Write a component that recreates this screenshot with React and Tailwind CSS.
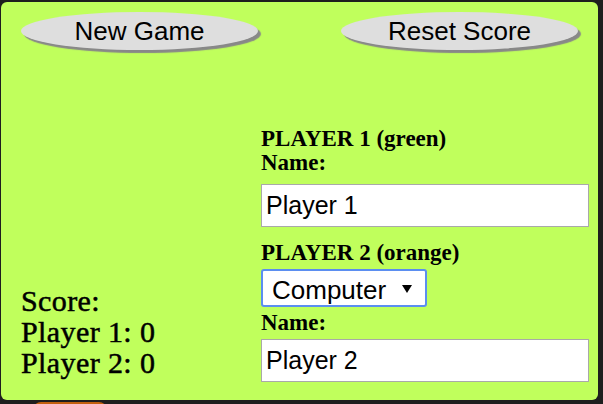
import React, { useState } from 'react';

const serif = { fontFamily: '"Liberation Serif", "DejaVu Serif", serif' };
const sans = { fontFamily: '"Liberation Sans", Arial, sans-serif' };

const PillButton = ({ children, onClick }) => (
  <button
    onClick={onClick}
    className="w-[237px] h-[38px] rounded-[50%] bg-[#dedede] text-black text-[26px] leading-none shadow-[3px_3px_1px_#888888]"
    style={sans}
  >
    {children}
  </button>
);

export default function App() {
  const [score, setScore] = useState({ p1: 0, p2: 0 });
  const [p1Name, setP1Name] = useState('Player 1');
  const [p2Name, setP2Name] = useState('Player 2');
  const [p2Type, setP2Type] = useState('computer');

  return (
    <div className="w-[603px] h-[404px] overflow-hidden bg-[#1e1e1e]">
      <div className="ml-px mt-[2px] w-[597px] h-[398px] rounded-md bg-[#c0ff5c] pl-5 pr-[9px] pt-[10px]">
        {/* Top buttons */}
        <div className="flex justify-between w-[557px]">
          <PillButton>New Game</PillButton>
          <PillButton onClick={() => setScore({ p1: 0, p2: 0 })}>Reset Score</PillButton>
        </div>

        <div className="flex items-end mt-[77px]">
          {/* Score */}
          <div
            className="w-[240px] mb-[4px] text-[30px] leading-[31px] tracking-[0.4px] text-black [-webkit-text-stroke:0.5px_black]"
            style={serif}
          >
            <div>Score:</div>
            <div>Player 1: {score.p1}</div>
            <div>Player 2: {score.p2}</div>
          </div>

          {/* Player settings */}
          <div className="w-[328px] flex flex-col text-black" style={serif}>
            <div className="text-[23px] leading-6 font-bold">PLAYER 1 (green)</div>
            <div className="text-[23px] leading-6 font-bold">Name:</div>
            <input
              value={p1Name}
              onChange={(e) => setP1Name(e.target.value)}
              className="mt-[8.5px] h-[43px] w-full border border-[#a9a9a9] bg-white pl-1 text-[25px] text-black outline-none"
              style={sans}
            />
            <div className="mt-[14.5px] text-[23px] leading-6 font-bold">PLAYER 2 (orange)</div>
            <div className="relative mt-[3.5px] w-[166px]">
              <select
                value={p2Type}
                onChange={(e) => setP2Type(e.target.value)}
                className="appearance-none w-[166px] h-[38px] rounded-[3px] border-2 border-[#5b8ef0] bg-white pl-[9px] text-[26px] text-black outline-none"
                style={sans}
              >
                <option value="computer">Computer</option>
                <option value="human">Human</option>
              </select>
              <svg
                className="pointer-events-none absolute left-[141px] top-[16px]"
                width="10"
                height="8"
                viewBox="0 0 10 8"
              >
                <polygon points="0,0 10,0 5,8" fill="black" />
              </svg>
            </div>
            <div className="mt-[4.5px] text-[23px] leading-6 font-bold">Name:</div>
            <input
              value={p2Name}
              onChange={(e) => setP2Name(e.target.value)}
              className="mt-[3.5px] h-[43px] w-full border border-[#a9a9a9] bg-white pl-1 text-[25px] text-black outline-none"
              style={sans}
            />
          </div>
        </div>
      </div>
      {/* Edge of the board peeking out below */}
      <div className="ml-[33px] mt-[2px] w-[74px] h-[20px] rounded-t-lg bg-[#c4600e]" />
    </div>
  );
}
